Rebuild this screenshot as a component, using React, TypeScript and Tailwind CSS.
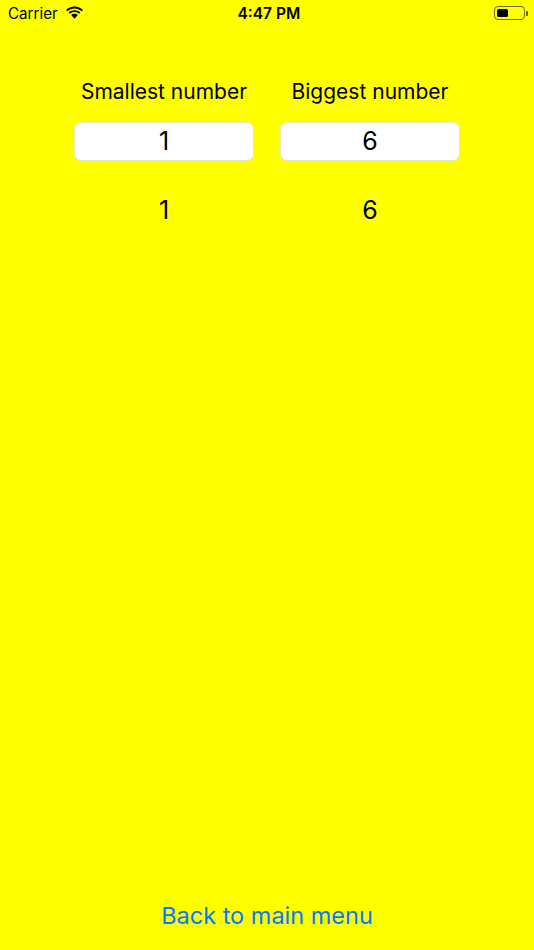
export default function App() {
  const font = { fontFamily: "Inter, 'Liberation Sans', sans-serif" };
  return (
    <div style={font} className="w-[534px] h-[950px] bg-[#ffff00] flex flex-col text-black overflow-hidden">
      <div className="h-[28px] shrink-0 flex items-center justify-between relative pl-[8px] pr-[6px]">
        <div className="flex items-center gap-[7px]">
          <span className="text-[15.200px] leading-[18px]">Carrier</span>
          <svg width="19" height="14" viewBox="0 0 18 13" className="mb-[3px]">
            <path d="M9 2.200c2.600 0 5 1 6.800 2.700l1.200-1.300C14.900 1.600 12.100.4 9 .4S3.100 1.600 1 3.600l1.200 1.300C4 3.200 6.400 2.200 9 2.200z" fill="#000" />
            <path d="M9 5.600c1.700 0 3.200.6 4.400 1.700l1.200-1.300C13.100 4.600 11.100 3.800 9 3.800S4.900 4.600 3.400 6l1.200 1.300C5.800 6.200 7.300 5.600 9 5.600z" fill="#000" />
            <path d="M9 7.200c-1.200 0-2.300.5-3.100 1.200L9 12l3.100-3.600C11.300 7.700 10.200 7.200 9 7.200z" fill="#000" />
          </svg>
        </div>
        <span className="absolute left-[237.500px] top-[5px] text-[15.500px] leading-[18px] font-semibold">4:47 PM</span>
        <div className="flex items-center gap-[1px] mb-[2px]">
          <div className="w-[31px] h-[14px] rounded-[4px] border border-[#6b6b00] p-[2px]">
            <div className="w-[11px] h-full rounded-[1.5px] bg-black" />
          </div>
          <div className="w-[2px] h-[5px] rounded-r-[1px] bg-[#6b6b00]" />
        </div>
      </div>

      <div className="flex justify-center gap-[26px] pt-[50px]">
        {[
          ["Smallest number", "1"],
          ["Biggest number", "6"],
        ].map(([label, value]) => (
          <div key={label} className="w-[180px] flex flex-col items-center">
            <div className="whitespace-nowrap text-[21px] leading-[28px]">{label}</div>
            <div className="mt-[16px] w-full h-[39px] pt-[1px] rounded-[7px] bg-white border border-[#e6e6cc] flex items-center justify-center text-[25px]">
              {value}
            </div>
            <div className="mt-[33px] text-[25px] leading-[32px]">{value}</div>
          </div>
        ))}
      </div>

      <div className="mt-auto pb-[17px] text-center text-[#007aff] text-[23.500px] leading-[34px]">Back to main menu</div>
    </div>
  );
}
